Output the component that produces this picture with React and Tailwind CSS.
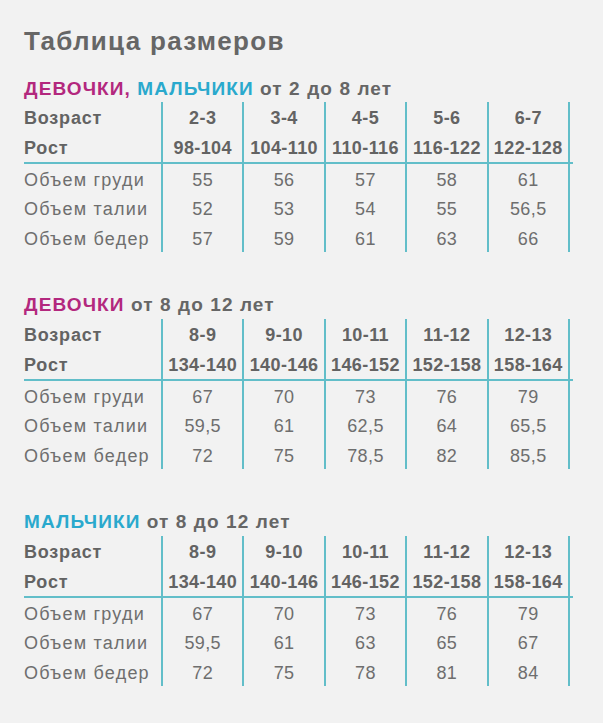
const sections = [
  {
    title: [
      { t: "ДЕВОЧКИ", c: "text-[#b3287e]" },
      { t: ", ", c: "text-[#b3287e]" },
      { t: "МАЛЬЧИКИ", c: "text-[#2aa9cd]" },
      { t: " от 2 до 8 лет", c: "text-[#666666]" },
    ],
    age: ["2-3", "3-4", "4-5", "5-6", "6-7"],
    height: ["98-104", "104-110", "110-116", "116-122", "122-128"],
    rows: [
      ["Объем груди", ["55", "56", "57", "58", "61"]],
      ["Объем талии", ["52", "53", "54", "55", "56,5"]],
      ["Объем бедер", ["57", "59", "61", "63", "66"]],
    ],
  },
  {
    title: [
      { t: "ДЕВОЧКИ", c: "text-[#b3287e]" },
      { t: " от 8 до 12 лет", c: "text-[#666666]" },
    ],
    age: ["8-9", "9-10", "10-11", "11-12", "12-13"],
    height: ["134-140", "140-146", "146-152", "152-158", "158-164"],
    rows: [
      ["Объем груди", ["67", "70", "73", "76", "79"]],
      ["Объем талии", ["59,5", "61", "62,5", "64", "65,5"]],
      ["Объем бедер", ["72", "75", "78,5", "82", "85,5"]],
    ],
  },
  {
    title: [
      { t: "МАЛЬЧИКИ", c: "text-[#2aa9cd]" },
      { t: " от 8 до 12 лет", c: "text-[#666666]" },
    ],
    age: ["8-9", "9-10", "10-11", "11-12", "12-13"],
    height: ["134-140", "140-146", "146-152", "152-158", "158-164"],
    rows: [
      ["Объем груди", ["67", "70", "73", "76", "79"]],
      ["Объем талии", ["59,5", "61", "63", "65", "67"]],
      ["Объем бедер", ["72", "75", "78", "81", "84"]],
    ],
  },
];

function HeadRow({ label, values }) {
  return (
    <>
      <div className="h-[30px] pt-[3px] leading-[27px] font-bold tracking-[0.8px] text-[#636363]">{label}</div>
      {values.map((v, i) => (
        <div key={i} className="h-[30px] pt-[3px] leading-[27px] font-bold tracking-[0.4px] text-[#636363] text-center whitespace-nowrap border-l-2 border-[#62bec9]">
          {v}
        </div>
      ))}
      <div className="h-[30px] border-l-2 border-[#62bec9]" />
    </>
  );
}

function DataRow({ label, values }) {
  return (
    <>
      <div className="h-[29.33px] pt-[3px] leading-[26.33px] tracking-[1.2px] text-[#6e6e6e] whitespace-nowrap">{label}</div>
      {values.map((v, i) => (
        <div key={i} className="h-[29.33px] pt-[3px] leading-[26.33px] tracking-[0.4px] text-[#6e6e6e] text-center border-l-2 border-[#62bec9]">
          {v}
        </div>
      ))}
      <div className="h-[29.33px] border-l-2 border-[#62bec9]" />
    </>
  );
}

function SizeTable({ s, first }) {
  return (
    <section className={first ? "mt-[21px]" : "mt-[41px]"}>
      <h2 className="h-[24px] leading-[24px] text-[19px] font-bold tracking-[1.1px] whitespace-pre">
        {s.title.map((p, i) => (
          <span key={i} className={p.c}>{p.t}</span>
        ))}
      </h2>
      <div className={`${first ? "mt-[1px]" : "mt-[2px]"} grid grid-cols-[137px_repeat(5,81.4px)_5px] text-[18px]`}>
        <HeadRow label="Возраст" values={s.age} />
        <HeadRow label="Рост" values={s.height} />
        <div className="col-span-7 h-[2px] bg-[#62bec9]" />
        {s.rows.map(([label, vals]) => (
          <DataRow key={label} label={label} values={vals} />
        ))}
      </div>
    </section>
  );
}

export default function App() {
  return (
    <div className="min-h-[723px] w-[603px] bg-[#f2f2f2] px-[24px] pt-[26px] font-['Liberation_Sans',Arial,sans-serif]">
      <h1 className="h-[30px] leading-[30px] text-[26px] font-bold tracking-[1.3px] text-[#666666]">Таблица размеров</h1>
      {sections.map((s, i) => (
        <SizeTable key={i} s={s} first={i === 0} />
      ))}
    </div>
  );
}
